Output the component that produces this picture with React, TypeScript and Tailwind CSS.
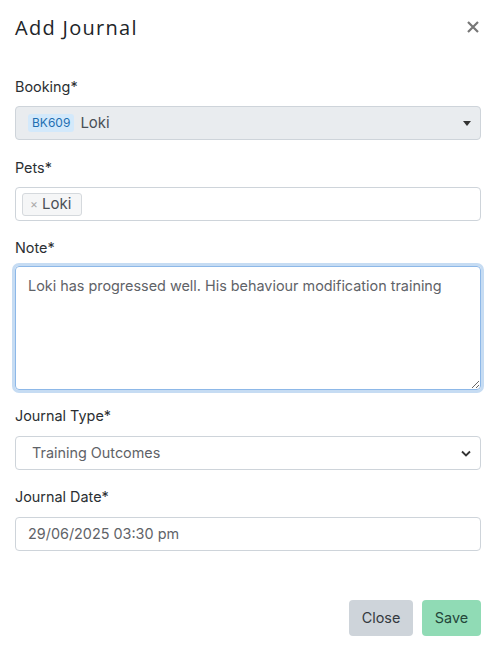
import { useState } from 'react'

export default function App() {
  const [note, setNote] = useState('Loki has progressed well. His behaviour modification training')

  return (
    <div className="h-[651px] w-[496px] bg-white font-['Inter',sans-serif] text-[#2b2f33]">
      {/* Cabecera */}
      <header className="flex items-center justify-between px-[15px] pt-[15px] pb-[20px]">
        <h2 className="font-['Open_Sans',sans-serif] text-[20px] font-normal leading-[26px] tracking-[1.3px] text-[#212529]">
          Add Journal
        </h2>
        <button className="mr-[2px] mt-[-2px] text-[#777]">
          <svg width="12" height="12" viewBox="0 0 12 12">
            <path d="M1 1L11 11M11 1L1 11" stroke="currentColor" strokeWidth="2.2" />
          </svg>
        </button>
      </header>

      <div className="flex flex-col px-[15px] text-[14.4px]">
        {/* Booking */}
        <label className="mb-[9px] mt-[16px] leading-[20px]">Booking*</label>
        <div className="flex h-[34px] items-center rounded-[4px] border border-[#ced4da] bg-[#e9ecef] pl-[12px] pr-[9px]">
          <span className="rounded-[3px] bg-[#d3e9fb] px-[4px] py-[1px] text-[12px] leading-[16px] text-[#1f6fb2]">
            BK609
          </span>
          <span className="ml-[6px] flex-1 text-[15px] text-[#4a5056]">Loki</span>
          <svg width="8" height="5" viewBox="0 0 8 5">
            <path d="M0 0H8L4 5Z" fill="#333" />
          </svg>
        </div>

        {/* Pets */}
        <label className="mb-[9px] mt-[18px] leading-[20px]">Pets*</label>
        <div className="flex h-[34px] items-center rounded-[4px] border border-[#ced4da] bg-white pl-[6px]">
          <span className="flex h-[23px] items-center rounded-[3px] border border-[#d5d9dd] bg-[#f5f6f7] pl-[7px] pr-[10px] text-[15px] text-[#4a5056]">
            <span className="mr-[4px] text-[12px] text-[#aaa]">×</span>
            Loki
          </span>
        </div>

        {/* Note */}
        <label className="mb-[8px] mt-[17px] leading-[20px]">Note*</label>
        <textarea
          value={note}
          onChange={(e) => setNote(e.target.value)}
          className="h-[124px] rounded-[4px] border border-[#8db8e8] px-[12px] py-[8px] leading-[22px] text-[#5f6368] shadow-[0_0_0_3px_#c6dcf3] outline-none"
        />

        {/* Journal type */}
        <label className="mb-[10px] mt-[16px] leading-[20px]">Journal Type*</label>
        <div className="flex h-[34px] items-center rounded-[4px] border border-[#ced4da] bg-white pl-[16px] pr-[9px]">
          <span className="flex-1 text-[#5f6368]">Training Outcomes</span>
          <svg width="10" height="7" viewBox="0 0 10 7">
            <path d="M1 1.5L5 5.5L9 1.5" stroke="#333" strokeWidth="1.8" fill="none" />
          </svg>
        </div>

        {/* Journal date */}
        <label className="mb-[10px] mt-[17px] leading-[20px]">Journal Date*</label>
        <div className="flex h-[34px] items-center rounded-[4px] border border-[#ced4da] bg-white px-[12px] text-[#5f6368]">
          29/06/2025 03:30 pm
        </div>

        {/* Botones */}
        <div className="mt-[49px] flex justify-end gap-[9px]">
          <button className="h-[36px] w-[64px] rounded-[4px] bg-[#ced4da] text-[#343a40]">
            Close
          </button>
          <button className="h-[36px] w-[59px] rounded-[4px] bg-[#90dbb5] text-[#24463a]">
            Save
          </button>
        </div>
      </div>
    </div>
  )
}
